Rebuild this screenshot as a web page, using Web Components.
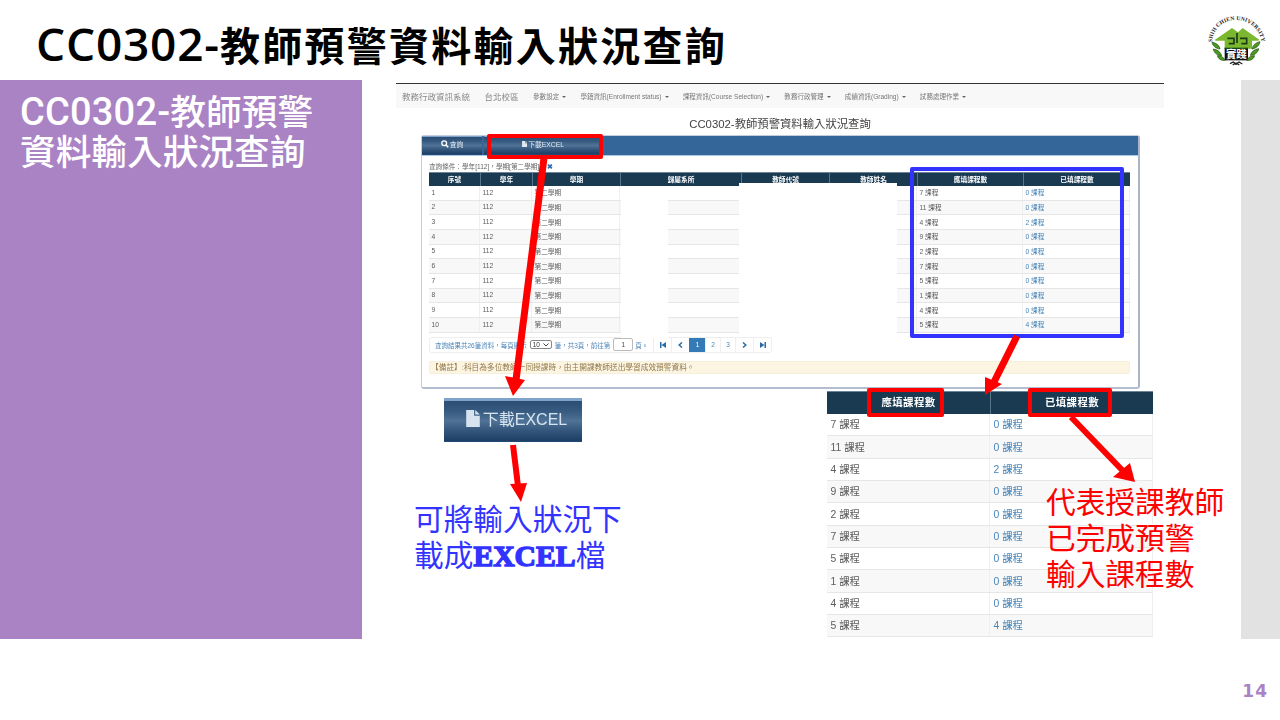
<!DOCTYPE html>
<html lang="zh-Hant">
<head>
<meta charset="utf-8">
<title>CC0302</title>
<style>
html,body{margin:0;padding:0;background:#fff}
body{width:1280px;height:720px;overflow:hidden;font-family:"Noto Sans","Noto Sans CJK TC",sans-serif}
.t1{font:600 46px/48px "Open Sans","Noto Sans CJK TC",sans-serif;letter-spacing:.8px}
.t2{font:500 38px/40px Roboto,"Noto Sans CJK TC",sans-serif;letter-spacing:.2px}
</style>
</head>
<body>
<slide-page>
  <span slot="title"><span class="t1">CC0302-</span>教師預警資料輸入狀況查詢</span>
  <span slot="side"><span class="t2">CC0302-</span>教師預警<br>資料輸入狀況查詢</span>
  <slide-stage slot="stage"></slide-stage>
  <span slot="num">14</span>
</slide-page>
<script>
const FONT_UI='"Liberation Sans","Noto Sans CJK TC",sans-serif';
const FILE_ICON='<svg viewBox="0 0 12 15" style="width:.78em;height:.96em;flex:none" aria-hidden="true"><path fill="currentColor" d="M0 0h7v5h5v10H0z"/><path fill="currentColor" d="M8 0l4 4H8z"/></svg>';
function def(name,html){
  customElements.define(name,class extends HTMLElement{
    constructor(){super();const t=document.createElement('template');t.innerHTML=typeof html==='function'?html(this):html;this.attachShadow({mode:'open'}).appendChild(t.content.cloneNode(true));}
  });
}

def('school-logo',`<style>:host{display:block;width:80px;height:70px}svg{display:block}</style>
<svg width="80" height="70" viewBox="0 0 240 210">
  <defs><path id="arc" d="M66 112 C70 62 108 44 140 45 C176 46 206 70 214 106"/></defs>
  <text font-family="Liberation Serif,serif" font-weight="700" font-size="17" fill="#222" letter-spacing=".3"><textPath href="#arc">SHIH CHIEN UNIVERSITY</textPath></text>
  <path fill="#111" d="M104 128h70v38h-70z"/>
  <path fill="#7cb82f" d="M74 105 126 69l18 13 14-13 50 35-3 3h-19v24h-82v-24H78z"/>
  <path fill="none" stroke="#1d3a16" stroke-width="5" d="M112 100h20v16h-16M150 100h20v16h-16M141 84v30"/>
  <path fill="#1b4a17" d="M104 128h70v4h-70z"/>
  <text x="139" y="160" text-anchor="middle" font-family="Noto Sans CJK TC,sans-serif" font-weight="700" font-size="31" fill="#fff">實踐</text>
  <g fill="#4d9a20" stroke="#1e4b12" stroke-width="2">
    <path d="M66 112c14 2 22 10 24 20-12-1-22-9-24-20z"/>
    <path d="M70 132c14 2 22 10 25 20-13 0-23-8-25-20z"/>
    <path d="M82 152c12 0 20 6 24 14-12 2-21-4-24-14z"/>
    <path d="M210 110c-14 3-22 11-24 22 12-2 22-10 24-22z"/>
    <path d="M206 131c-14 2-22 10-25 20 13 0 23-8 25-20z"/>
    <path d="M194 152c-12 0-20 6-24 14 12 2 21-4 24-14z"/>
  </g>
  <path stroke="#222" stroke-width="4" fill="none" d="M120 176l10-5 8 7 9-7 10 6M128 180l10-6 10 6"/>
</svg>`);

def('slide-page',`<style>
:host{display:grid;grid-template-rows:80px 559px 81px;width:1280px;height:720px;font-family:"Noto Sans","Noto Sans CJK TC",sans-serif}
header{display:flex;justify-content:space-between;align-items:flex-start}
h1{margin:0;padding:19px 0 0 36px;font-size:40px;line-height:48px;font-weight:700;color:#000;letter-spacing:2.25px;white-space:nowrap}
school-logo{margin:5px 10px 0 0}
main{display:grid;grid-template-columns:362px 1fr 39px}
aside{background:#aa83c5;color:#fff;padding:12px 0 0 20px;font-family:"Liberation Sans","Noto Sans CJK TC",sans-serif;font-size:35.7px;line-height:40px;font-weight:500;white-space:nowrap}
.band{background:#e2e2e2}
footer{display:flex;justify-content:flex-end;padding:43px 12px 0 0;color:#aa83c5;font:700 17px/18px "DejaVu Sans",sans-serif;letter-spacing:1px}
</style>
<header><h1><slot name="title"></slot></h1><school-logo></school-logo></header>
<main><aside><slot name="side"></slot></aside><slot name="stage"></slot><div class="band"></div></main>
<footer><slot name="num"></slot></footer>`);

/* generic table: cols = px widths, head = | list, rows = ; list of | cells. A cell that starts with ~ is a link */
def('data-table',el=>{
  const cols=el.getAttribute('cols');
  const head=el.getAttribute('head').split('|');
  const rows=el.getAttribute('rows').split(';').map(r=>r.split('|'));
  const cell=c=>c[0]==='~'?`<div class="td a">${c.slice(1)}</div>`:`<div class="td">${c}</div>`;
  return `<style>
:host{display:block;font-family:${FONT_UI};font-size:var(--fs,7px);color:#5c5c5c}
.g{display:grid;grid-template-columns:${cols}}
.g.h{height:var(--hh,14px);background:#1a3a52;border-top:1px solid #6c8496;box-sizing:border-box}
.th{display:flex;align-items:center;justify-content:center;color:#fff;font-weight:700;border-left:1px solid #55758a;letter-spacing:var(--hls,0);padding-bottom:var(--pb,2px)}
.th:first-child{border-left:0}
.g.r{height:var(--rh,14.67px);box-sizing:border-box;border-bottom:1px solid #e6e6e6}
.g.r:nth-of-type(odd){background:#f8f8f8}
.td{display:flex;align-items:center;padding-left:var(--pl,2.5px);padding-bottom:var(--pb2,1px);border-right:1px solid #efefef;white-space:nowrap;min-width:0}
.a{color:#4a86b8}
</style>
<div class="g h">${head.map(h=>`<div class="th">${h}</div>`).join('')}</div>
${rows.map(r=>`<div class="g r">${r.map(cell).join('')}</div>`).join('')}`;
});

def('site-nav',`<style>
:host{display:flex;align-items:center;height:25px;box-sizing:border-box;background:#f8f8f8;border-top:1px solid #333;padding-left:6px;font-family:${FONT_UI};color:#8a8a8a;white-space:nowrap}
.b{font-size:8.5px;margin-right:14.5px}
.m{font-size:6.55px;margin-right:14.2px;color:#777}
.m::after{content:"";display:inline-block;margin-left:3px;vertical-align:1px;border:2px solid transparent;border-top-color:#666;border-bottom:0}
</style>
<span class="b">教務行政資訊系統</span><span class="b">台北校區</span>
<span class="m">參數設定</span><span class="m">學籍資訊(Enrollment status)</span><span class="m">課程資訊(Course Selection)</span><span class="m">教務行政管理</span><span class="m">成績資訊(Grading)</span><span class="m">試務處理作業</span>`);

def('pager-bar',`<style>
:host{display:flex;align-items:center;width:343px;height:16px;box-sizing:border-box;border:1px solid #eee;border-radius:3px;font-family:${FONT_UI};font-size:6.5px;color:#4c86b8;white-space:nowrap;padding-left:5px}
.sel{display:inline-flex;justify-content:space-between;align-items:center;box-sizing:border-box;width:22px;height:9px;border:1px solid #888;border-radius:2px;margin:0 3px 0 3px;padding:0 2px;color:#333}
.inp{display:inline-block;box-sizing:border-box;width:20px;height:13px;border:1px solid #bbb;border-radius:2px;margin:0 2px 0 3px;text-align:center;line-height:11px;color:#444}
.p{margin-left:auto;display:flex;height:100%}
.p span{display:flex;align-items:center;justify-content:center;box-sizing:border-box;border-left:1px solid #eee;color:#4c86b8}
.p .on{background:#337ab7;color:#fff;border-color:#337ab7}
.p svg{display:block}
</style>
<span>查詢結果共26筆資料，每頁顯示</span><span class="sel">10<svg width="6" height="4" viewBox="0 0 6 4"><path d="M.5.5 3 3 5.5.5" fill="none" stroke="#444"/></svg></span><span>筆，共3頁，前往第</span><span class="inp">1</span><span>頁。</span>
<div class="p">
<span style="width:18px"><svg width="6" height="6" viewBox="0 0 6 6"><path fill="#2b6ca6" d="M0 0h1.5v6H0zM6 0v6L1.5 3z"/></svg></span>
<span style="width:18px"><svg width="5" height="6" viewBox="0 0 5 6"><path fill="none" stroke="#2b6ca6" stroke-width="1.5" d="M4 .5 1.2 3 4 5.5"/></svg></span>
<span class="on" style="width:16px">1</span><span style="width:15px">2</span><span style="width:15px">3</span>
<span style="width:18px"><svg width="5" height="6" viewBox="0 0 5 6"><path fill="none" stroke="#2b6ca6" stroke-width="1.5" d="M1 .5 3.8 3 1 5.5"/></svg></span>
<span style="width:18px"><svg width="6" height="6" viewBox="0 0 6 6"><path fill="#2b6ca6" d="M6 0H4.5v6H6zM0 0v6L4.5 3z"/></svg></span>
</div>`);

def('tool-btn',`<style>
:host{display:flex;align-items:center;justify-content:center;gap:var(--gap,1px);padding-bottom:var(--pb,3px);padding-left:var(--pl,0);background:linear-gradient(#2b4d73 0%,#375a80 25%,#4f7296 50%,#33557b 75%,#1d3e66 100%);border-top:var(--bt,1px) solid #7fa3cb;border-bottom:1px solid #244a73;color:var(--c,#dfe9f2);font-family:${FONT_UI};white-space:nowrap;box-sizing:border-box}
</style><slot></slot>`);

const ROWS=[['7','0'],['11','0'],['4','2'],['9','0'],['2','0'],['7','0'],['5','0'],['1','0'],['4','0'],['5','4']];
const mainRows=ROWS.map((r,i)=>`${i+1}|112|第二學期||||${r[0]} 課程|~${r[1]} 課程`).join(';');
const zoomRows=ROWS.map(r=>`${r[0]} 課程|~${r[1]} 課程`).join(';');

def('web-shot',`<style>
:host{display:block;width:768px;font-family:${FONT_UI};filter:blur(.3px);color:#555}
.title{margin:0;height:27px;box-sizing:border-box;padding-top:9px;text-align:center;font-size:11.35px;line-height:14px;font-weight:400;color:#444}
.card{position:relative;margin-left:25px;width:719px;height:254px;box-sizing:border-box;border:1px solid #c3cbdc;border-right:2px solid #aab4cc;border-bottom:2px solid #b4bdd0;border-radius:3px;background:#fff}
.bar{display:flex;gap:2px;height:19px;background:#34669a;border-bottom:1px solid #a9c8e4}
tool-btn{height:100%;font-size:6.8px}
.body{padding:5px 8px 0 7px}
.q{height:11px;font-size:6.6px;line-height:11px;color:#666;white-space:nowrap}
.q i{font-style:normal;color:#2a6fb0;font-weight:700;margin-left:8px}
data-table{--fs:6.7px;--hh:14px;--rh:14.67px}
pager-bar{margin-top:4px}
.note{margin-top:8px;height:13px;background:#fbf5e2;border:1px solid #f6efdc;border-radius:2px;box-sizing:border-box;font-size:7.7px;line-height:11px;color:#93784a;padding-left:1px;white-space:nowrap}
.w{position:absolute;background:#fff}
</style>
<site-nav></site-nav>
<h2 class="title">CC0302-教師預警資料輸入狀況查詢</h2>
<div class="card">
  <div class="bar">
    <tool-btn style="width:60px"><svg width="8" height="8" viewBox="0 0 10 10"><circle cx="4" cy="4" r="3" fill="none" stroke="#fff" stroke-width="1.6"/><path d="M6.2 6.2 9 9" stroke="#fff" stroke-width="2"/></svg>查詢</tool-btn>
    <tool-btn style="width:118px">${FILE_ICON}下載EXCEL</tool-btn>
  </div>
  <div class="body">
    <div class="q">查詢條件：學年[112]，學期[第二學期]<i>✖</i></div>
    <data-table cols="51px 52px 88px 121px 88px 88px 106px 107px" head="序號|學年|學期|歸屬系所|教師代號|教師姓名|應填課程數|已填課程數" rows="${mainRows}"></data-table>
    <pager-bar></pager-bar>
    <div class="note">【備註】:科目為多位教師一同授課時，由主開課教師送出學習成效預警資料。</div>
  </div>
  <!-- blanked-out personal data, painted over the table -->
  <div class="w" style="left:199px;top:50px;width:47px;height:152px"></div>
  <div class="w" style="left:317px;top:47px;width:158px;height:153px"></div>
</div>`);

def('big-button',`<style>:host{display:block;width:138px;height:44px;filter:blur(.4px)}tool-btn{height:100%;--bt:3px;--c:#d6e4ef;--gap:3px;--pb:6px;--pl:7px;font-size:16px}</style><tool-btn>${FILE_ICON.replace('.78em;height:.96em','14px;height:17px')}下載EXCEL</tool-btn>`);

def('note-text',`<style>:host{display:block;font-family:"Liberation Sans","Noto Sans CJK TC",sans-serif;font-size:29.7px;line-height:36px;color:var(--c);white-space:nowrap;font-weight:400}
::slotted(b){font-family:"Liberation Serif",serif;font-weight:700;-webkit-text-stroke:1.4px currentColor}</style><slot></slot>`);

def('slide-stage',`<style>
:host{display:block;position:relative;min-width:0}
.abs{position:absolute}
svg{position:absolute;left:0;top:0;pointer-events:none}
.box{position:absolute;box-sizing:border-box;border:4px solid #f00;border-radius:2px}
.zt{filter:blur(.35px)}
</style>
<web-shot class="abs" style="left:34px;top:3px"></web-shot>
<big-button class="abs" style="left:82px;top:318px"></big-button>
<data-table class="abs zt" style="left:465px;top:311px;width:326px;--fs:10.4px;--hh:23px;--rh:22.35px;--pl:3.5px;--hls:.4px;--pb2:2px;--pb:4px" cols="163px 163px" head="應填課程數|已填課程數" rows="${zoomRows}"></data-table>
<note-text class="abs" style="left:52px;top:422px;--c:#3333ff">可將輸入狀況下<br>載成<b>EXCEL</b>檔</note-text>
<note-text class="abs" style="left:684px;top:404.5px;--c:#f00">代表授課教師<br>已完成預警<br>輸入課程數</note-text>
<div class="box" style="left:125px;top:54px;width:116px;height:25px"></div>
<div class="box" style="left:548px;top:87px;width:214px;height:171px;border-color:#3333ff"></div>
<div class="box" style="left:505px;top:308px;width:77px;height:29px"></div>
<div class="box" style="left:666px;top:308px;width:84px;height:29px"></div>
<svg width="879" height="559" viewBox="362 80 879 559" aria-hidden="true">
  <g fill="#f00" stroke="#f00">
    <path stroke-width="7" d="M544 158 516 380"/><path stroke="none" d="M513 396 505 376 525 380z"/>
    <path stroke-width="7" d="M1017 336 994 382"/><path stroke="none" d="M985 395V377L1002 384z"/>
    <path stroke-width="6" d="M1071 417 1124 472"/><path stroke="none" d="M1135 482 1113 477 1130 463z"/>
    <path stroke-width="6" d="M513 445 518 486"/><path stroke="none" d="M521 502 510 484 527 483z"/>
  </g>
</svg>`);
</script>
</body>
</html>
